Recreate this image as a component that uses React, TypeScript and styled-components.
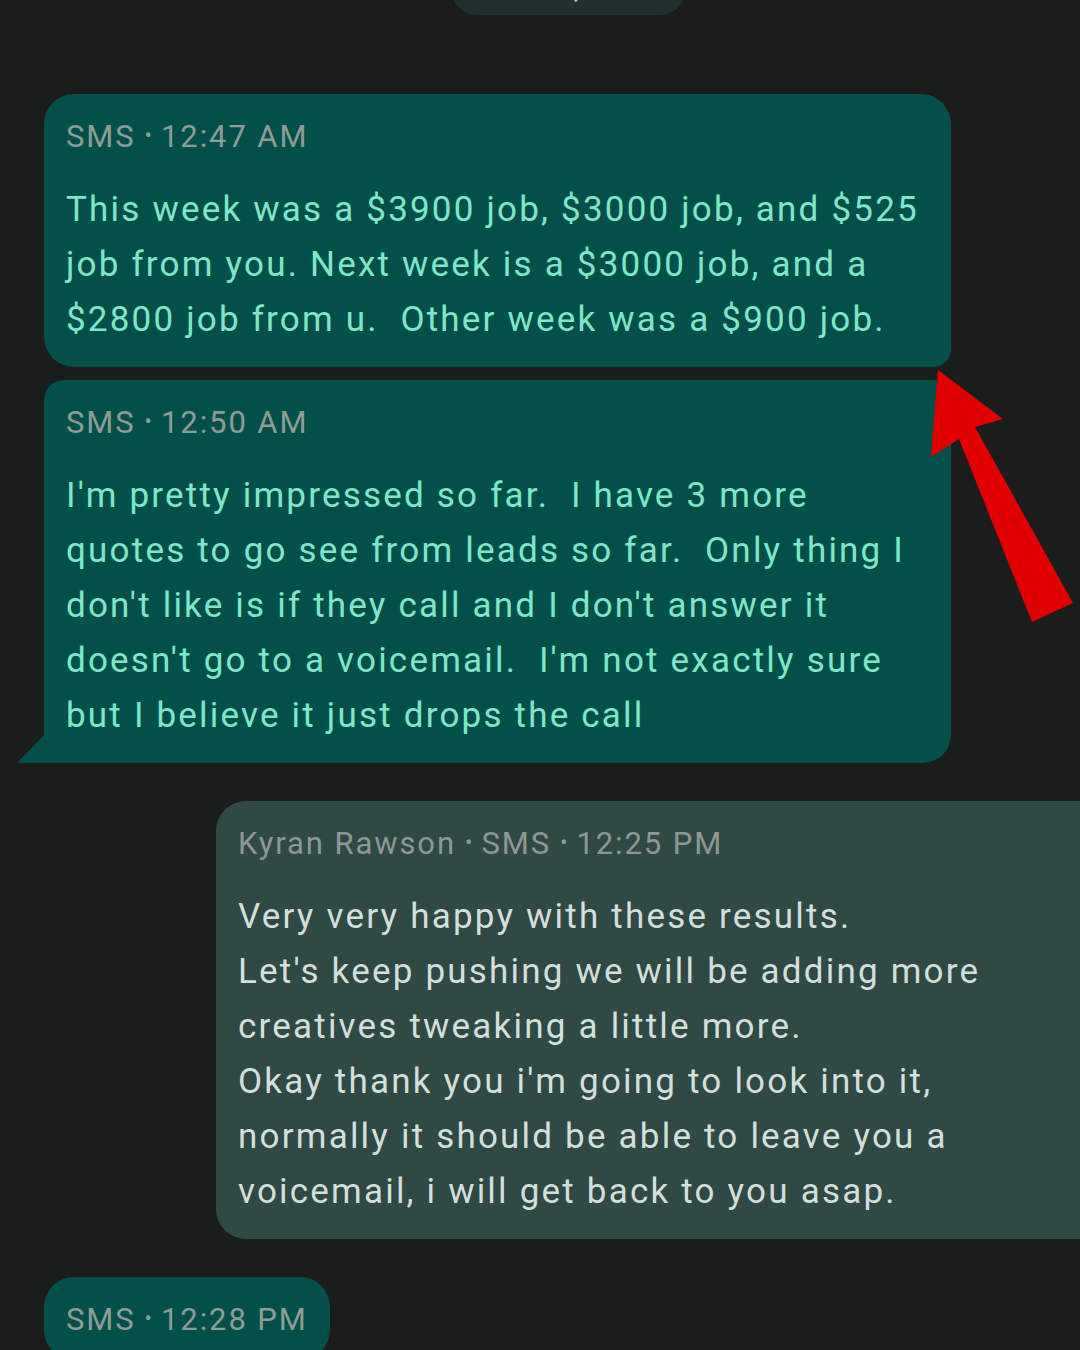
import React from "react";
import styled, { createGlobalStyle } from "styled-components";

const GlobalStyle = createGlobalStyle`
  html, body {
    margin: 0;
    padding: 0;
    background: #1b1c1c;
    overflow: hidden;
  }
  body {
    font-family: Roboto, "Noto Sans", "Liberation Sans", sans-serif;
  }
`;

const Page = styled.div`
  position: relative;
  width: 1080px;
  height: 1350px;
  overflow: hidden;
  display: flex;
  flex-direction: column;
  align-items: flex-start;
`;

const DatePill = styled.div`
  flex-shrink: 0;
  align-self: center;
  margin-top: -38px;
  margin-left: 56px;
  width: 235px;
  height: 53px;
  border-radius: 26px;
  background: #22302d;
  color: #c9d3d0;
  font-size: 28px;
  letter-spacing: 1px;
  display: flex;
  align-items: center;
  justify-content: center;
`;

const Thread = styled.div`
  flex-shrink: 0;
  display: flex;
  flex-direction: column;
  width: 100%;
  margin-top: 79px;
`;

type Tone = "mine" | "theirs";

const Bubble = styled.div<{
  $tone: Tone;
  $radius: string;
  $tail?: boolean;
  $gap: number;
  $indent: number;
  $width: number;
}>`
  position: relative;
  flex-shrink: 0;
  box-sizing: border-box;
  width: ${({ $width }) => $width}px;
  margin-left: ${({ $indent }) => $indent}px;
  margin-top: ${({ $gap }) => $gap}px;
  padding: 22px 22px 20px 22px;
  border-radius: ${({ $radius }) => $radius};
  background: ${({ $tone }) => ($tone === "mine" ? "#03504a" : "#2f4945")};
  display: flex;
  flex-direction: column;
  gap: 25px;

  &::before {
    content: "";
    display: ${({ $tail }) => ($tail ? "block" : "none")};
    position: absolute;
    left: -27px;
    bottom: 0;
    width: 28px;
    height: 29px;
    background: inherit;
    clip-path: polygon(100% 0, 100% 100%, 0 100%);
  }
`;

const Meta = styled.div<{ $tone: Tone }>`
  font-size: 31px;
  line-height: 40px;
  letter-spacing: 1.9px;
  color: ${({ $tone }) => ($tone === "mine" ? "#8e9c97" : "#8d9894")};
  white-space: nowrap;
`;

const Dot = styled.span`
  display: inline-block;
  margin: 0 9px 0 9px;
  font-size: 22px;
  letter-spacing: 0;
  vertical-align: 4px;
`;

const Body = styled.div<{ $tone: Tone }>`
  font-size: 35px;
  line-height: 55px;
  letter-spacing: 2.2px;
  color: ${({ $tone }) => ($tone === "mine" ? "#7fe6c9" : "#d3dfdb")};
  white-space: pre;
`;

const Arrow = styled.svg`
  position: absolute;
  left: 0;
  top: 0;
  pointer-events: none;
`;

interface Message {
  tone: Tone;
  meta: string[];
  lines: string[];
  radius: string;
  tail?: boolean;
  gap: number;
  indent: number;
  width: number;
}

const messages: Message[] = [
  {
    tone: "mine",
    meta: ["SMS", "12:47 AM"],
    lines: [
      "This week was a $3900 job, $3000 job, and $525",
      "job from you. Next week is a $3000 job, and a",
      "$2800 job from u.  Other week was a $900 job.",
    ],
    radius: "30px 30px 18px 30px",
    gap: 0,
    indent: 44,
    width: 907,
  },
  {
    tone: "mine",
    meta: ["SMS", "12:50 AM"],
    lines: [
      "I'm pretty impressed so far.  I have 3 more",
      "quotes to go see from leads so far.  Only thing I",
      "don't like is if they call and I don't answer it",
      "doesn't go to a voicemail.  I'm not exactly sure",
      "but I believe it just drops the call",
    ],
    radius: "20px 18px 28px 0",
    tail: true,
    gap: 13,
    indent: 44,
    width: 907,
  },
  {
    tone: "theirs",
    meta: ["Kyran Rawson", "SMS", "12:25 PM"],
    lines: [
      "Very very happy with these results.",
      "Let's keep pushing we will be adding more",
      "creatives tweaking a little more.",
      "Okay thank you i'm going to look into it,",
      "normally it should be able to leave you a",
      "voicemail, i will get back to you asap.",
    ],
    radius: "30px 0 0 30px",
    gap: 38,
    indent: 216,
    width: 880,
  },
  {
    tone: "mine",
    meta: ["SMS", "12:28 PM"],
    lines: [],
    radius: "30px 30px 30px 30px",
    gap: 38,
    indent: 44,
    width: 286,
  },
];

const App: React.FC = () => {
  return (
    <>
      <GlobalStyle />
      <Page>
        <DatePill>Mar 14, 2024</DatePill>
        <Thread>
          {messages.map((m, i) => (
            <Bubble
              key={i}
              $tone={m.tone}
              $radius={m.radius}
              $tail={m.tail}
              $gap={m.gap}
              $indent={m.indent}
              $width={m.width}
            >
              <Meta $tone={m.tone}>
                {m.meta.map((part, j) => (
                  <React.Fragment key={j}>
                    {j > 0 && <Dot>•</Dot>}
                    {part}
                  </React.Fragment>
                ))}
              </Meta>
              {m.lines.length > 0 && (
                <Body $tone={m.tone}>{m.lines.join("\n")}</Body>
              )}
            </Bubble>
          ))}
        </Thread>
        <Arrow width="1080" height="1350" viewBox="0 0 1080 1350">
          <polygon
            points="938,370 1003,419 975,427 1073,603 1032,622 959,439 931,457"
            fill="#e00000"
          />
        </Arrow>
      </Page>
    </>
  );
};

export default App;
